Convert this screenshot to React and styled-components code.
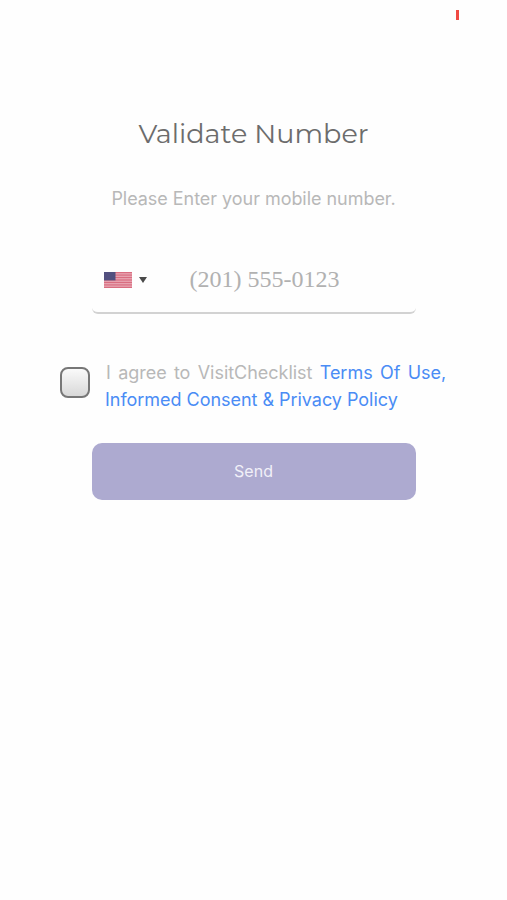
import React, { useState } from "react";
import styled, { createGlobalStyle } from "styled-components";

function ValidateNumber() {
  const [phone, setPhone] = useState("");
  const [agreed, setAgreed] = useState(false);

  return (
    <Wrapper>
      <GlobalStyle />
      <StatusBar>
        <BatteryLevel />
      </StatusBar>
      <Title>Validate Number</Title>
      <SubTitle>Please Enter your mobile number.</SubTitle>
      <PhoneField>
        <CountrySelect type="button" aria-label="Country">
          <UsFlag />
          <Caret />
        </CountrySelect>
        <PhoneInput
          type="tel"
          name="phone"
          value={phone}
          onChange={(e) => setPhone(e.target.value)}
          placeholder="(201) 555-0123"
        />
      </PhoneField>
      <Agreement>
        <Checkbox
          type="checkbox"
          checked={agreed}
          onChange={(e) => setAgreed(e.target.checked)}
        />
        <Terms>
          <TermsLine $spacing="2.3px" $indent="1px">
            I agree to VisitChecklist <Link href="#">Terms Of Use,</Link>
          </TermsLine>
          <TermsLine>
            <Link href="#">Informed Consent &amp; Privacy Policy</Link>
          </TermsLine>
        </Terms>
      </Agreement>
      <SendButton type="button">Send</SendButton>
    </Wrapper>
  );
}

function UsFlag() {
  const stripes = [0, 2, 4, 6, 8, 10, 12];
  return (
    <svg width="28" height="16" viewBox="0 0 28 16">
      <rect width="28" height="16" fill="#e9a9b5" />
      {stripes.map((n) => (
        <rect
          key={n}
          y={(n * 16) / 13}
          width="28"
          height={16 / 13}
          fill="#d96d80"
        />
      ))}
      <rect width="11.5" height="8.4" fill="#52507f" />
    </svg>
  );
}

export default ValidateNumber;

const GlobalStyle = createGlobalStyle`
  * {
    box-sizing: border-box;
  }
  body {
    margin: 0;
    background-color: #fefefe;
  }
`;

const Wrapper = styled.div`
  display: flex;
  flex-direction: column;
  align-items: center;
  width: 100%;
  height: 100vh;
  overflow: hidden;
  background-color: #fefefe;
  font-family: Inter, "Liberation Sans", sans-serif;
`;

const StatusBar = styled.div`
  display: flex;
  justify-content: flex-end;
  width: 100%;
  height: 114px;
  padding: 10px 48px 0 0;
`;

const BatteryLevel = styled.div`
  width: 3px;
  height: 10px;
  background-color: #f04a43;
`;

const Title = styled.h1`
  margin: 0;
  color: #6c6c6c;
  font-family: Montserrat, Inter, sans-serif;
  font-size: 27px;
  font-weight: 400;
  line-height: 40px;
  white-space: nowrap;
`;

const SubTitle = styled.p`
  margin: 33px 0 0;
  color: #b8b8b8;
  font-size: 18px;
  letter-spacing: -0.04px;
  line-height: 24px;
  white-space: nowrap;
`;

const PhoneField = styled.div`
  display: flex;
  align-items: center;
  width: 324px;
  height: 68px;
  margin-top: 35px;
  padding-top: 1px;
  border-bottom: 2px solid #d2d2d2;
  border-radius: 6px;
`;

const CountrySelect = styled.button`
  display: flex;
  align-items: center;
  gap: 7px;
  width: 97px;
  padding: 1px 0 0 12px;
  border: none;
  background: none;
`;

const Caret = styled.span`
  border-top: 6px solid #4a4a4a;
  border-right: 4.5px solid transparent;
  border-left: 4.5px solid transparent;
`;

const PhoneInput = styled.input`
  width: 200px;
  padding: 0 0 0 1px;
  border: none;
  outline: none;
  background: none;
  color: #666666;
  font-family: "Liberation Serif", serif;
  font-size: 24px;
  &::placeholder {
    color: #b1b1b1;
  }
`;

const Agreement = styled.div`
  display: flex;
  align-items: flex-start;
  width: 387px;
  margin-top: 45px;
`;

const Checkbox = styled.input`
  appearance: none;
  flex-shrink: 0;
  width: 30px;
  height: 31px;
  margin: 8px 15px 0 0;
  border: 2px solid #777777;
  border-radius: 8px;
  background: linear-gradient(#fafafa, #d8d8d8);
`;

const Terms = styled.div`
  color: #b8b8b8;
  font-size: 18px;
  line-height: 27px;
`;

const TermsLine = styled.p`
  margin: 0;
  padding-left: ${(props) => props.$indent || 0};
  letter-spacing: -0.03px;
  word-spacing: ${(props) => props.$spacing || "normal"};
  white-space: nowrap;
`;

const Link = styled.a`
  color: #4a8cf5;
  text-decoration: none;
`;

const SendButton = styled.button`
  width: 324px;
  height: 57px;
  margin-top: 30px;
  padding: 0 0 2px;
  border: none;
  border-radius: 10px;
  background-color: #adaad0;
  color: #f1f0f8;
  font-family: inherit;
  font-size: 16px;
`;
